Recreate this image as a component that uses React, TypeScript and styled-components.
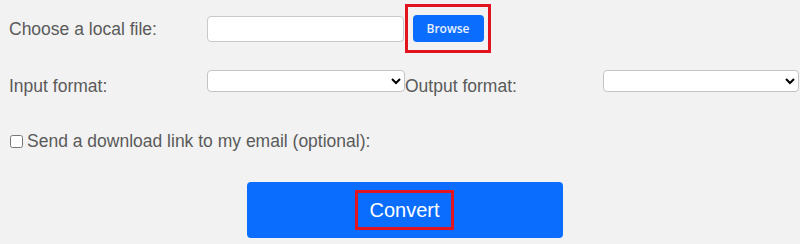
import React from "react";
import styled, { createGlobalStyle } from "styled-components";

const GlobalStyle = createGlobalStyle`
  html, body {
    margin: 0;
    padding: 0;
    background: #f2f2f2;
  }
  body {
    font-family: "Liberation Sans", Arial, sans-serif;
  }
`;

const Page = styled.div`
  width: 800px;
  height: 244px;
  box-sizing: border-box;
  padding: 4px 0 0 9px;
  background: #f2f2f2;
  color: #5a5a5a;
  font-size: 17.5px;
  overflow: hidden;
`;

const Row = styled.div<{ $align?: string; $top?: number }>`
  display: grid;
  grid-template-columns: 198px 198px 198px 196px;
  align-items: ${(p) => p.$align || "center"};
  margin-top: ${(p) => p.$top || 0}px;
`;

const Label = styled.label`
  line-height: 20px;
  white-space: nowrap;
`;

const TextInput = styled.input`
  box-sizing: border-box;
  width: 197px;
  height: 26px;
  border: 1px solid #c9c9c9;
  border-radius: 4px;
  background: #fff;
  margin: 0;
`;

const Select = styled.select`
  box-sizing: border-box;
  width: ${(p) => (p.$w ? p.$w : 198)}px;
  height: 22px;
  margin: 0 0 4px 0;
  border: 1px solid #c4c4c4;
  border-radius: 4px;
  background: #fff;
  font-size: 13px;
` as any;

const Highlight = styled.div`
  display: inline-flex;
  align-items: center;
  justify-content: center;
  box-sizing: border-box;
  border: 3px solid #e2141f;
`;

const BrowseWrap = styled(Highlight)`
  width: 86px;
  height: 49px;
  justify-self: start;
`;

const BrowseButton = styled.button`
  width: 71px;
  height: 27px;
  border: none;
  border-radius: 4px;
  background: #0b6dfd;
  color: #e8f0ff;
  font-family: "Open Sans", "Noto Sans", sans-serif;
  font-weight: 600;
  font-size: 12px;
  padding: 0;
`;

const CheckRow = styled.div`
  display: flex;
  align-items: center;
  margin-top: 35px;
  line-height: 20px;
`;

const Check = styled.input`
  width: 13px;
  height: 13px;
  margin: 0 4px 0 1px;
`;

const Footer = styled.div`
  display: flex;
  justify-content: center;
  margin-top: 31px;
`;

const ConvertButton = styled.button`
  width: 316px;
  height: 56px;
  border: none;
  border-radius: 4px;
  background: #0b6dfd;
  display: flex;
  align-items: center;
  justify-content: center;
  padding: 0;
  cursor: pointer;
`;

const ConvertLabel = styled(Highlight)`
  width: 99px;
  height: 40px;
  color: #fff;
  font-family: "Liberation Sans", Arial, sans-serif;
  font-size: 20px;
`;

export default function App() {
  return (
    <Page>
      <GlobalStyle />
      <Row>
        <Label>Choose a local file:</Label>
        <TextInput type="text" />
        <BrowseWrap>
          <BrowseButton>Browse</BrowseButton>
        </BrowseWrap>
      </Row>
      <Row $align="end" $top={17}>
        <Label>Input format:</Label>
        <Select>
          <option></option>
        </Select>
        <Label>Output format:</Label>
        <Select $w={196}>
          <option></option>
        </Select>
      </Row>
      <CheckRow>
        <Check type="checkbox" />
        <Label>Send a download link to my email (optional):</Label>
      </CheckRow>
      <Footer>
        <ConvertButton>
          <ConvertLabel>Convert</ConvertLabel>
        </ConvertButton>
      </Footer>
    </Page>
  );
}
